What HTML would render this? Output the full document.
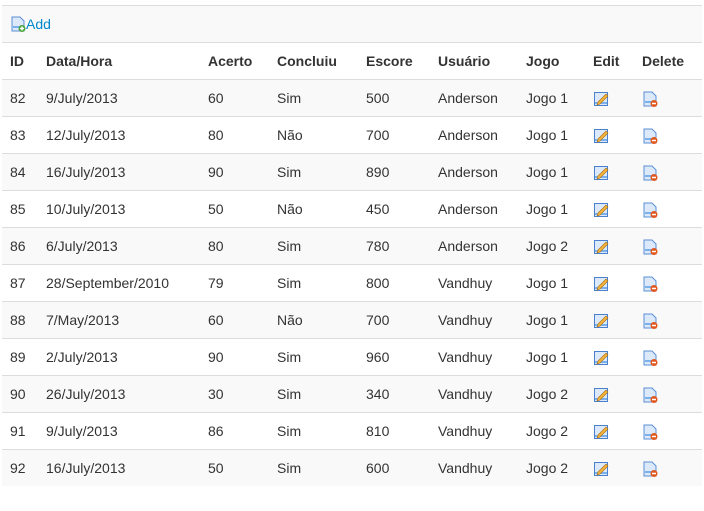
<!DOCTYPE html>
<html><head><style>
body{margin:0;background:#fff;font-family:"Liberation Sans",sans-serif;font-size:14px;color:#333}
table{position:absolute;left:2px;top:5px;width:700px;border-collapse:collapse;table-layout:fixed;font-size:14px}
td,th{height:36px;padding:0 8px;border-top:1px solid #ddd;text-align:left;vertical-align:middle;line-height:20px}
th{font-weight:bold}
tr.s td{background:#f9f9f9}
a{color:#0088cc;text-decoration:none;font-size:14px;vertical-align:middle}
.ic{display:inline-block;width:16px;height:16px;vertical-align:middle;margin-top:-1px}
</style></head><body>
<table>
<colgroup><col style="width:36px"><col style="width:162px"><col style="width:69px"><col style="width:89px"><col style="width:72px"><col style="width:88px"><col style="width:67px"><col style="width:49px"><col></colgroup>
<tr class="s"><td colspan="9" style="padding-left:8px"><svg class="ic" style="margin-top:-2px" viewBox="0 0 16 16"><path d="M2 1h8l4 4v10H2z" fill="#dce9fa" stroke="#5b8fd6"/><path d="M3 11h9" stroke="#7ab0ec" stroke-width="2"/><circle cx="12" cy="12.5" r="3.5" fill="#4aa33c"/><path d="M10 12.5h4M12 10.5v4" stroke="#fff" stroke-width="1.5"/></svg><a style="position:relative;top:-1px">Add</a></td></tr>
<tr><th>ID</th><th>Data/Hora</th><th>Acerto</th><th>Concluiu</th><th>Escore</th><th>Usuário</th><th>Jogo</th><th>Edit</th><th>Delete</th></tr>
<tbody id="b"></tbody>
</table>
<script>
var d=[[82,"9/July/2013",60,"Sim",500,"Anderson","Jogo 1"],[83,"12/July/2013",80,"Não",700,"Anderson","Jogo 1"],[84,"16/July/2013",90,"Sim",890,"Anderson","Jogo 1"],[85,"10/July/2013",50,"Não",450,"Anderson","Jogo 1"],[86,"6/July/2013",80,"Sim",780,"Anderson","Jogo 2"],[87,"28/September/2010",79,"Sim",800,"Vandhuy","Jogo 1"],[88,"7/May/2013",60,"Não",700,"Vandhuy","Jogo 1"],[89,"2/July/2013",90,"Sim",960,"Vandhuy","Jogo 1"],[90,"26/July/2013",30,"Sim",340,"Vandhuy","Jogo 2"],[91,"9/July/2013",86,"Sim",810,"Vandhuy","Jogo 2"],[92,"16/July/2013",50,"Sim",600,"Vandhuy","Jogo 2"]];
var e='<svg class="ic" viewBox="0 0 16 16"><rect x="1.5" y="1.5" width="13" height="13" fill="#dce9fa" stroke="#4a80cc"/><path d="M2 12h12" stroke="#7ab0ec" stroke-width="2"/><path d="M5 11l8-8 2 2-8 8-3 1z" fill="#f2b43c" stroke="#a86a10" stroke-width=".6"/></svg>';
var x='<svg class="ic" viewBox="0 0 16 16"><path d="M2 1h8l4 4v10H2z" fill="#dce9fa" stroke="#5b8fd6"/><path d="M3 11h8" stroke="#7ab0ec" stroke-width="2"/><circle cx="12" cy="12.5" r="3.5" fill="#e0561c"/><path d="M10 12.5h4" stroke="#fff" stroke-width="1.5"/></svg>';
var h='';d.forEach(function(r,i){h+='<tr'+(i%2==0?' class="s"':'')+'>';r.forEach(function(c){h+='<td>'+c+'</td>'});h+='<td>'+e+'</td><td>'+x+'</td></tr>'});
document.getElementById('b').innerHTML=h;
</script>
</body></html>
